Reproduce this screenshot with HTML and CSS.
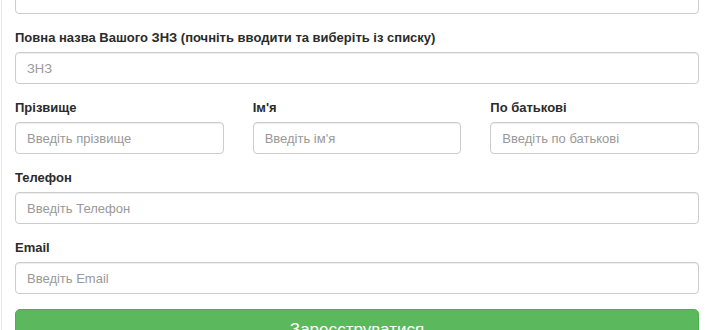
FILE: index.html
```html
<!DOCTYPE html>
<html lang="uk">
<head>
<meta charset="utf-8">
<link rel="stylesheet" href="styles.css">
</head>
<body>
<div class="page">
  <form class="form">
    <div class="group">
      <input class="control" type="text">
    </div>
    <div class="group">
      <label class="label">Повна назва Вашого ЗНЗ (почніть вводити та виберіть із списку)</label>
      <input class="control" type="text" placeholder="ЗНЗ">
    </div>
    <div class="row">
      <div class="group">
        <label class="label">Прізвище</label>
        <input class="control" type="text" placeholder="Введіть прізвище">
      </div>
      <div class="group">
        <label class="label">Ім'я</label>
        <input class="control" type="text" placeholder="Введіть ім'я">
      </div>
      <div class="group">
        <label class="label">По батькові</label>
        <input class="control" type="text" placeholder="Введіть по батькові">
      </div>
    </div>
    <div class="group">
      <label class="label">Телефон</label>
      <input class="control" type="text" placeholder="Введіть Телефон">
    </div>
    <div class="group">
      <label class="label">Email</label>
      <input class="control" type="text" placeholder="Введіть Email">
    </div>
    <button class="btn" type="button">Зареєструватися</button>
  </form>
</div>
</body>
</html>
```

FILE: styles.css
```css
html, body {
  margin: 0;
  padding: 0;
  background: #fff;
  overflow: hidden;
}
body {
  font-family: "Liberation Sans", Arial, sans-serif;
  font-size: 13px;
  color: #333;
}
.page {
  border-left: 1px solid #e6e6e6;
  margin-left: 1px;
  padding: 0 15px 0 13px;
  height: 330px;
  overflow: hidden;
  box-sizing: border-box;
}
.form {
  display: flex;
  flex-direction: column;
  margin-top: -18px;
}
.group {
  display: flex;
  flex-direction: column;
  margin-bottom: 14px;
}
.label {
  font-weight: bold;
  line-height: 19px;
  margin-bottom: 5px;
  font-size: 13px;
  color: #2b2b2b;
}
.control {
  box-sizing: border-box;
  height: 32px;
  width: 100%;
  padding: 6px 11px;
  font-family: "Liberation Sans", Arial, sans-serif;
  font-size: 13px;
  color: #555;
  background: #fff;
  border: 1px solid #ccc;
  border-radius: 4px;
  box-shadow: inset 0 1px 1px rgba(0,0,0,0.075);
  outline: none;
}
.control::placeholder {
  color: #999;
}
.row {
  display: grid;
  grid-template-columns: 1fr 1fr 1fr;
  column-gap: 29px;
}
.btn {
  box-sizing: border-box;
  margin-top: 1px;
  width: 100%;
  height: 44px;
  flex-shrink: 0;
  background: #5cb85c;
  border: 1px solid #4cae4c;
  border-radius: 5px;
  color: #fff;
  font-family: "Liberation Sans", Arial, sans-serif;
  font-size: 17px;
  padding: 7px 16px 10px;
  line-height: 24px;
  text-align: center;
}
```
